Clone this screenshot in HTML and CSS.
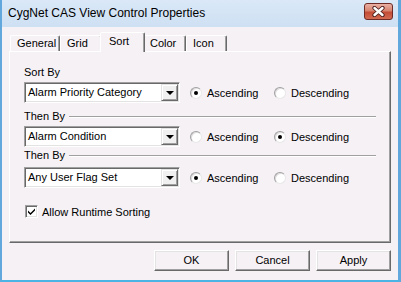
FILE: index.html
```html
<!doctype html>
<html>
	<head>
		<meta charset="utf-8">
		<title>CygNet CAS View Control Properties</title>
		<link rel="stylesheet" href="styles.css">
	</head>
	<body>
		<div class="window">
			<div class="titlebar">
				<span class="title">CygNet CAS View Control Properties</span>
				<span class="close">
					<svg width="13" height="11" viewBox="0 0 13 11">
						<path d="M2.5 2 L10.5 9 M10.5 2 L2.5 9" stroke="#4a1c1c" stroke-width="4.2" stroke-linecap="round"/>
						<path d="M2.5 2 L10.5 9 M10.5 2 L2.5 9" stroke="#ffffff" stroke-width="2.4" stroke-linecap="round"/>
					</svg>
				</span>
			</div>
			<div class="client">
				<div class="tabs">
					<span class="tab tab-general">General</span>
					<span class="tab tab-grid">Grid</span>
					<span class="tab tab-sort active">Sort</span>
					<span class="tab tab-color">Color</span>
					<span class="tab tab-icon">Icon</span>
				</div>
				<div class="panel">
					<div class="label">Sort By</div>
					<div class="row row-1">
						<div class="combo"><span class="combo-text">Alarm Priority Category</span><span class="drop"></span></div>
						<span class="radio checked"><span class="dot"></span>Ascending</span>
						<span class="radio"><span class="dot"></span>Descending</span>
					</div>
					<div class="label sep sep-1">Then By<span class="line"></span></div>
					<div class="row row-2">
						<div class="combo"><span class="combo-text">Alarm Condition</span><span class="drop"></span></div>
						<span class="radio"><span class="dot"></span>Ascending</span>
						<span class="radio checked"><span class="dot"></span>Descending</span>
					</div>
					<div class="label sep sep-2">Then By<span class="line"></span></div>
					<div class="row row-3">
						<div class="combo"><span class="combo-text">Any User Flag Set</span><span class="drop"></span></div>
						<span class="radio checked"><span class="dot"></span>Ascending</span>
						<span class="radio"><span class="dot"></span>Descending</span>
					</div>
					<div class="check-row">
						<span class="check">
							<svg width="9" height="9" viewBox="0 0 9 9"><path d="M1 3.5 L3.5 6 L8 1.5 L8 3.5 L3.5 8 L1 5.5 Z" fill="#000"/></svg>
						</span>
						Allow Runtime Sorting
					</div>
				</div>
				<div class="buttons">
					<span class="btn">OK</span>
					<span class="btn">Cancel</span>
					<span class="btn">Apply</span>
				</div>
			</div>
		</div>
	</body>
</html>
```

FILE: styles.css
```css
*{margin: 0;padding: 0;box-sizing: border-box;}
body{
	margin: 0;
	font-family: "Liberation Sans", Arial, sans-serif;
	font-size: 11px;
	color: #000;
}
.window{
	width: 401px;
	height: 282px;
	display: flex;
	flex-direction: column;
	background: linear-gradient(to bottom, #dae8f7, #c8dcf1 40px, #8fcbec);
	border-left: 2px solid #62a8dc;
	border-right: 3px solid #62a8dc;
	border-bottom: 2px solid #4cb4e4;
}
/* title bar */
.titlebar{
	height: 27px;
	display: flex;
	align-items: center;
	padding: 0 5px 2px 6px;
	flex-shrink: 0;
}
.title{
	flex: 1;
	font-size: 12px;
	padding-top: 1px;
}
.close{
	width: 29px;
	height: 17px;
	margin-top: -3px;
	border: 1px solid #6e2a24;
	border-radius: 3px;
	background: linear-gradient(to bottom, #eab1a5, #d7836f 45%, #c44c36 55%, #d26a52);
	display: flex;
	align-items: center;
	justify-content: center;
}
/* client area */
.client{
	flex: 1;
	background: #f5f1f5;
	padding: 5px 7px 0 7px;
}
.tabs{
	display: flex;
	align-items: flex-end;
	height: 19px;
	padding-left: 1px;
}
.tab{
	height: 16px;
	line-height: 14px;
	padding-left: 6px;
	border-top: 1px solid #ffffff;
	border-left: 1px solid #ffffff;
	border-right: 1px solid #696969;
	box-shadow: inset -1px 0 #a0a0a0;
	border-radius: 2px 2px 0 0;
	white-space: nowrap;
}
.tab-general{width: 50px;}
.tab-grid{width: 42px;}
.tab-sort{width: 45px;}
.tab-color{width: 43px;}
.tab-icon{width: 41px;}
.tab.active{
	height: 20px;
	margin: 0 -2px -1px -2px;
	padding-left: 8px;
	line-height: 16px;
	background: #f5f1f5;
	position: relative;
	z-index: 1;
}
.panel{
	height: 192px;
	border-top: 1px solid #ffffff;
	border-left: 1px solid #ffffff;
	border-right: 1px solid #696969;
	border-bottom: 1px solid #696969;
	box-shadow: inset -1px -1px #a0a0a0;
	padding: 14px 14px 0 14px;
}
.label{
	height: 13px;
	line-height: 13px;
}
.sep{
	display: flex;
	align-items: center;
}
.line{
	flex: 1;
	margin-left: 4px;
	height: 2px;
	border-top: 1px solid #a0a0a0;
	border-bottom: 1px solid #ffffff;
}
.sep-1{margin-top: 7px;}
.sep-2{margin-top: 2px;}
.row{
	display: flex;
	align-items: center;
	height: 21px;
	margin-top: 3px;
}
.row-3{margin-top: 5px;}
.combo{
	width: 156px;
	height: 21px;
	display: flex;
	background: #ffffff;
	border: 1px solid;
	border-color: #a0a0a0 #ffffff #ffffff #a0a0a0;
	box-shadow: inset 1px 1px #696969, inset -1px -1px #e3e3e3;
	padding: 1px;
}
.combo-text{
	flex: 1;
	line-height: 17px;
	padding-left: 2px;
}
.drop{
	width: 17px;
	height: 17px;
	background: #f0f0f0;
	border: 1px solid;
	border-color: #e3e3e3 #696969 #696969 #e3e3e3;
	box-shadow: inset 1px 1px #ffffff, inset -1px -1px #a0a0a0;
	display: flex;
	align-items: center;
	justify-content: center;
}
.drop::after{
	content: "";
	border-left: 4px solid transparent;
	border-right: 4px solid transparent;
	border-top: 4px solid #000;
	margin-top: 1px;
}
.radio{
	display: flex;
	align-items: center;
	width: 84px;
	white-space: nowrap;
}
.row .radio:nth-child(2){margin-left: 10px;}
.dot{
	width: 12px;
	height: 12px;
	margin-right: 5px;
	border-radius: 50%;
	background: #ffffff;
	border: 1px solid;
	border-color: #a0a0a0 #e8e8e8 #e8e8e8 #a0a0a0;
	box-shadow: inset 1px 1px #e0dcdf;
	display: flex;
	align-items: center;
	justify-content: center;
}
.radio.checked .dot::after{
	content: "";
	width: 4px;
	height: 4px;
	border-radius: 50%;
	background: #000;
}
.check-row{
	display: flex;
	align-items: center;
	height: 13px;
	margin-top: 17px;
	padding-left: 1px;
}
.check{
	width: 13px;
	height: 13px;
	margin-right: 4px;
	background: #ffffff;
	border: 1px solid;
	border-color: #a0a0a0 #ffffff #ffffff #a0a0a0;
	box-shadow: inset 1px 1px #696969, inset -1px -1px #e3e3e3;
	display: flex;
	align-items: center;
	justify-content: center;
}
.buttons{
	display: flex;
	justify-content: flex-end;
	gap: 6px;
	margin-top: 7px;
	padding-right: 0;
}
.btn{
	width: 75px;
	height: 21px;
	line-height: 17px;
	text-align: center;
	border: 1px solid;
	border-color: #ffffff #696969 #696969 #ffffff;
	box-shadow: inset -1px -1px #a0a0a0, inset 1px 1px #e3e3e3;
	padding-top: 1px;
}
```
